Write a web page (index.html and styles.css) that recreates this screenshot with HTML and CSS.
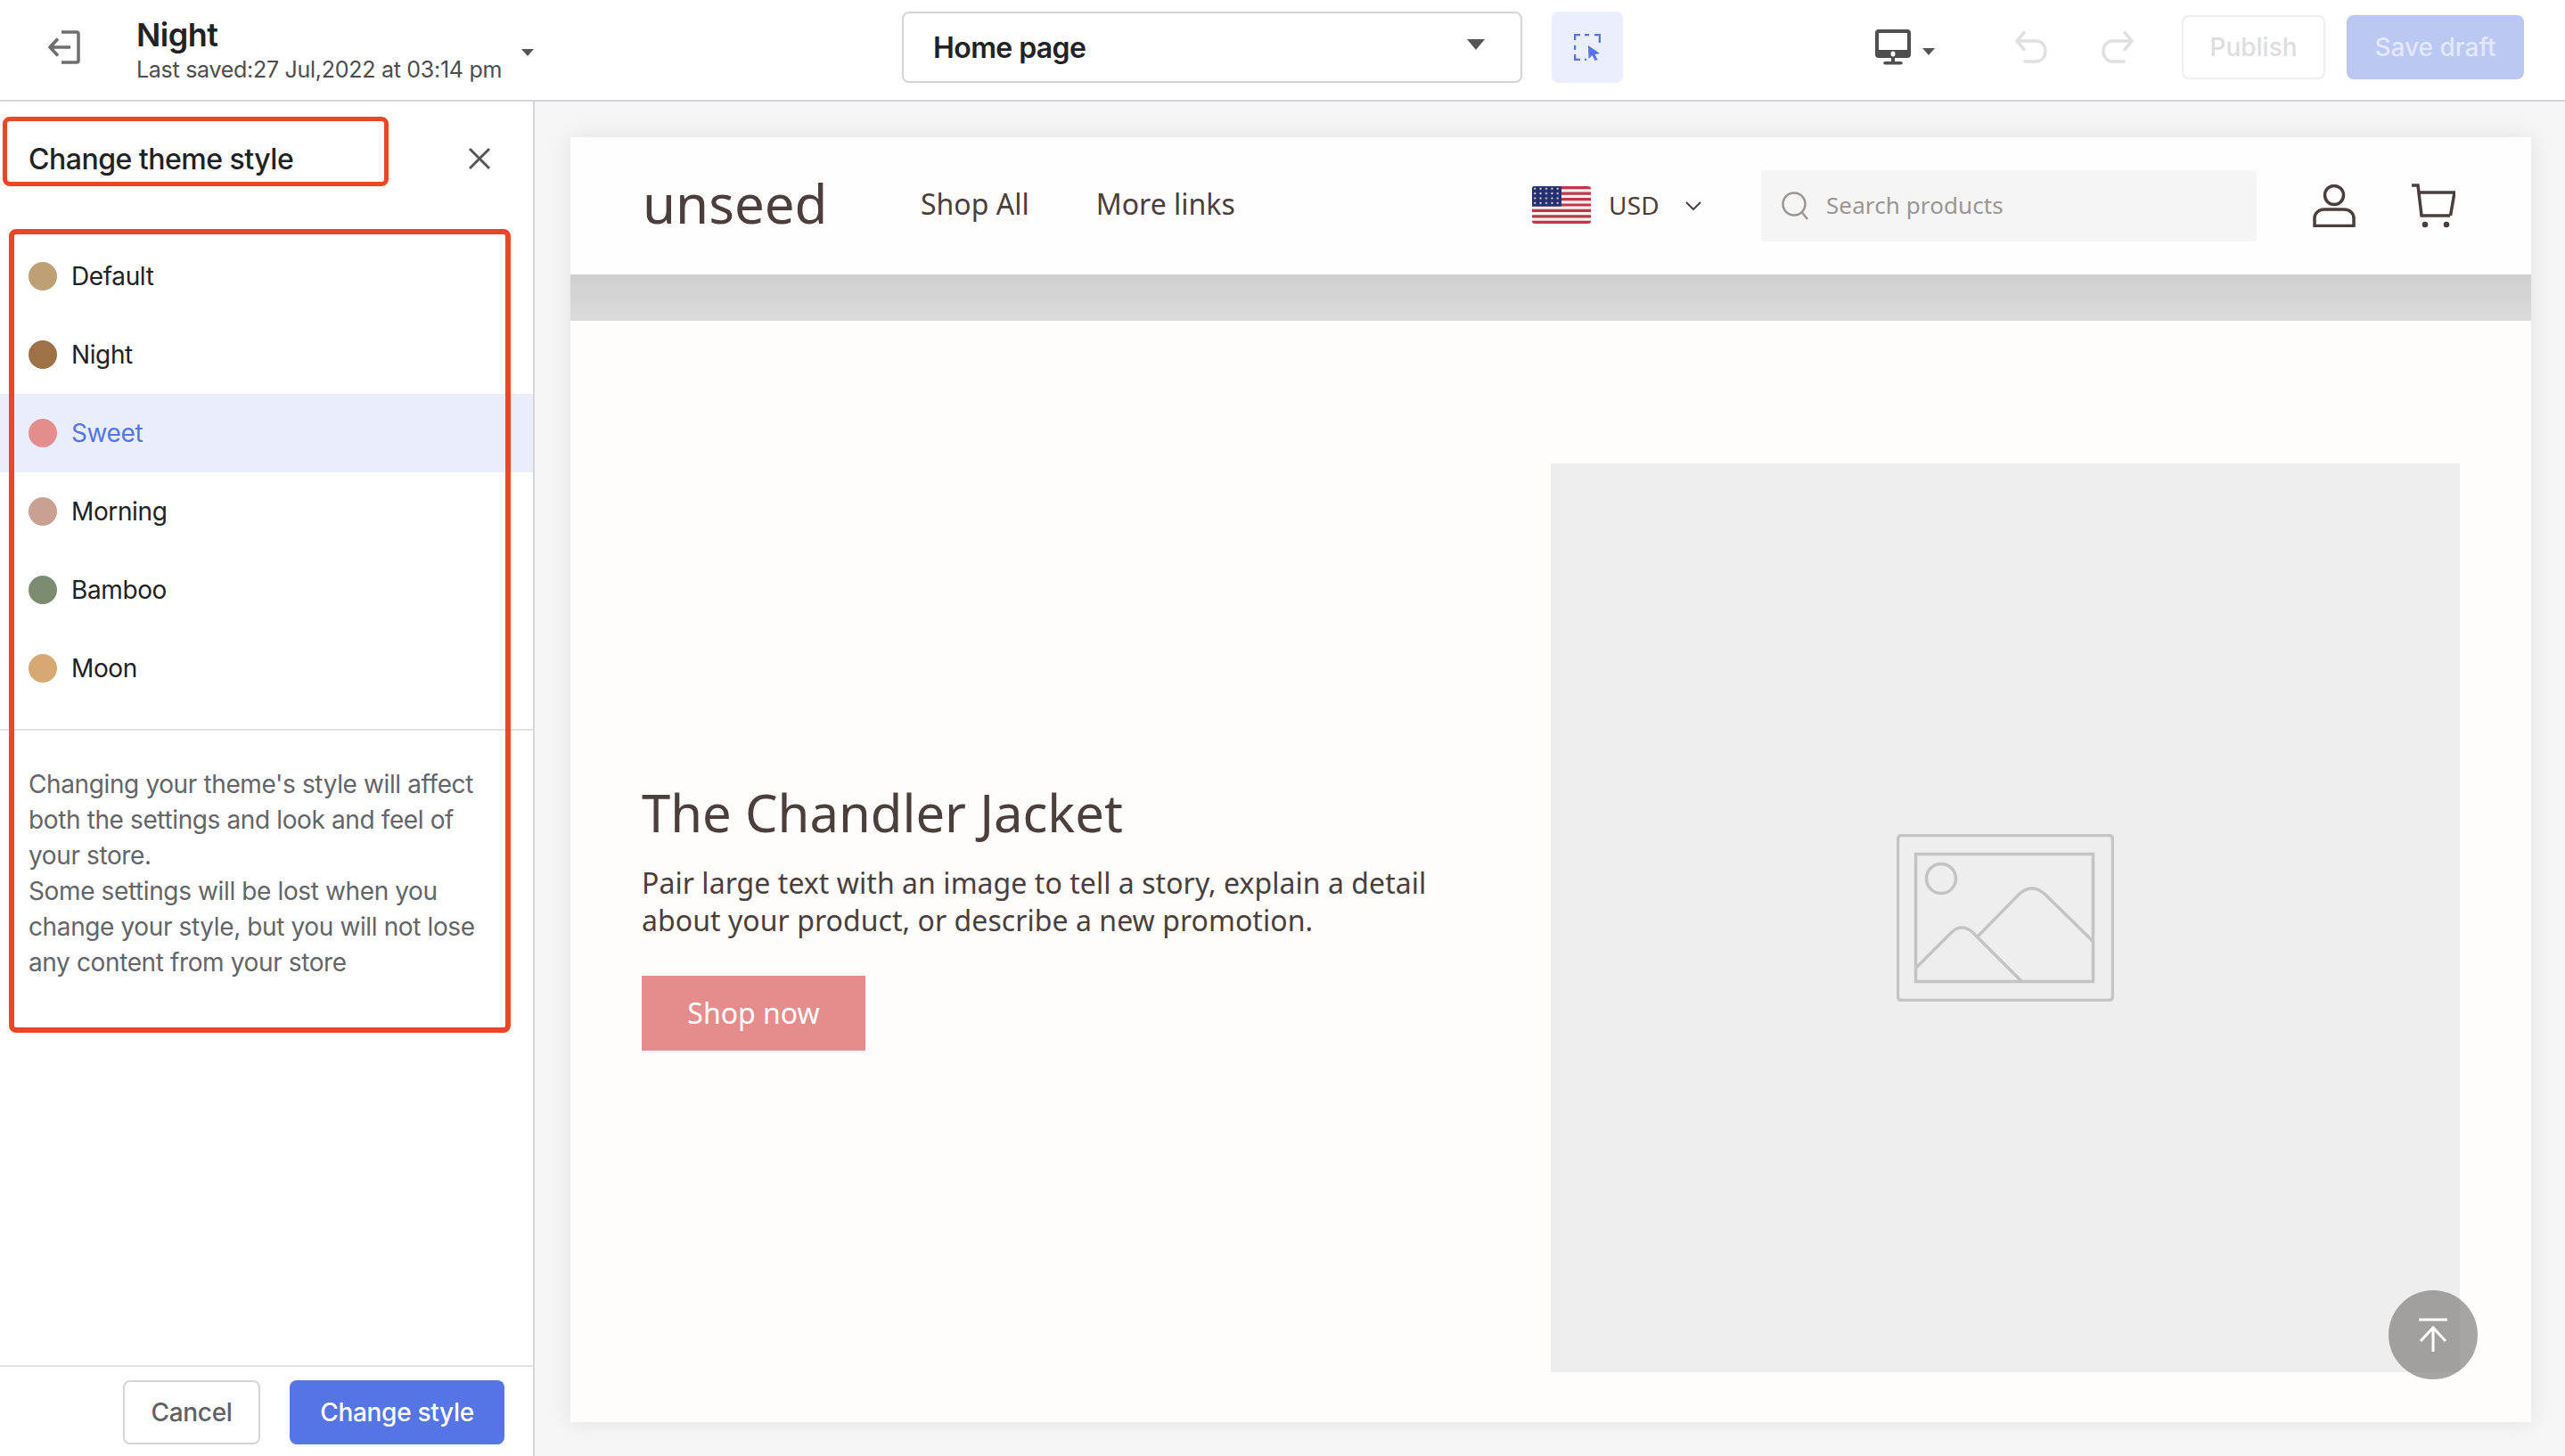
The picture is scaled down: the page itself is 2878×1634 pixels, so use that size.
FILE: index.html
```html
<!DOCTYPE html>
<html lang="en">
<head>
<meta charset="utf-8">
<title>Change theme style</title>
<link rel="stylesheet" href="styles.css">
</head>
<body>
<header class="topbar">
  <svg class="ico-back" viewBox="0 0 36 38"><path d="M15 2h17a2 2 0 0 1 2 2v30a2 2 0 0 1-2 2H15M25 19H2M11 9.500 2 19l9 9.500"/></svg>
  <div class="theme-meta">
    <div class="theme-name">Night</div>
    <div class="theme-saved">Last saved:27 Jul,2022 at 03:14 pm</div>
  </div>
  <span class="caret caret-meta"></span>
  <div class="page-select">
    <span>Home page</span>
    <span class="caret caret-select"></span>
  </div>
  <button class="pick-btn" aria-label="Select">
    <svg class="ico-pick" viewBox="0 0 30 30"><path class="dash" d="M1 7V1h6M12 1h5M23 1h6v9M1 13v5M1 23v6h6M12 29h2"/><path class="arrow" d="M16 13l13 9-5.500 1 3 6-3 1-3-6-4 4z"/></svg>
  </button>
  <div class="top-right">
    <svg class="ico-monitor" viewBox="0 0 40 40"><rect width="40" height="32" rx="4" fill="#4f4f4f"/><rect x="4" y="4" width="32" height="19" fill="#fff"/><ellipse cx="20" cy="27.500" rx="2.500" ry="3" fill="#fff"/><path d="M18 32h4v4h7a1.500 1.500 0 0 1 0 3.500H11a1.500 1.500 0 0 1 0-3.500h7z" fill="#4f4f4f"/></svg>
    <span class="caret caret-device"></span>
    <svg class="ico-hist ico-undo" viewBox="0 0 36 36"><path d="M10 1.500 2 11l8 9.500M2 11h22c5.500 0 10 5 10 11.500S29.500 34 24 34H11"/></svg>
    <svg class="ico-hist ico-redo" viewBox="0 0 36 36"><path d="M26 1.500 34 11l-8 9.500M34 11H12C6.500 11 2 16 2 22.500S6.500 34 12 34h13"/></svg>
    <button class="btn-publish">Publish</button>
    <button class="btn-save">Save draft</button>
  </div>
</header>

<div class="workspace">
  <aside class="sidebar">
    <div class="side-head">
      <h2 class="side-title">Change theme style</h2>
      <svg class="ico-close" viewBox="0 0 26 26"><path d="M2 2l22 22M24 2 2 24"/></svg>
    </div>
    <ul class="styles">
      <li class="style-row"><span class="dot dot-default"></span>Default</li>
      <li class="style-row"><span class="dot dot-night"></span>Night</li>
      <li class="style-row is-active"><span class="dot dot-sweet"></span>Sweet</li>
      <li class="style-row"><span class="dot dot-morning"></span>Morning</li>
      <li class="style-row"><span class="dot dot-bamboo"></span>Bamboo</li>
      <li class="style-row"><span class="dot dot-moon"></span>Moon</li>
    </ul>
    <div class="note">
      <p>Changing your theme's style will affect both the settings and look and feel of your store.</p>
      <p>Some settings will be lost when you change your style, but you will not lose any content from your store</p>
    </div>
    <div class="side-foot">
      <button class="btn-cancel">Cancel</button>
      <button class="btn-change">Change style</button>
    </div>
  </aside>

  <main class="canvas">
    <div class="store">
      <div class="store-head">
        <div class="logo">unseed</div>
        <nav class="store-nav"><span>Shop All</span><span>More links</span></nav>
        <div class="store-tools">
          <svg class="flag" viewBox="0 0 66 42">
            <defs>
              <pattern id="stars" width="6.400" height="5.400" patternUnits="userSpaceOnUse"><circle cx="3.200" cy="2.700" r="1.100" fill="#dfe3f0"/></pattern>
              <clipPath id="flagclip"><rect width="66" height="42" rx="3"/></clipPath>
            </defs>
            <g clip-path="url(#flagclip)">
              <rect width="66" height="42" fill="#f6f1f1"/>
              <path fill="#c0374a" d="M0 0h66v3.230H0zM0 6.460h66v3.230H0zM0 12.920h66v3.230H0zM0 19.380h66v3.230H0zM0 25.850h66v3.230H0zM0 32.310h66v3.230H0zM0 38.770h66V42H0z"/>
              <rect width="33" height="22.600" fill="#24306e"/>
              <rect width="33" height="22.600" fill="url(#stars)"/>
            </g>
          </svg>
          <span class="currency">USD</span>
          <svg class="ico-chev" viewBox="0 0 18 10"><path d="M1 1l8 8 8-8"/></svg>
          <div class="search">
            <svg class="ico-search" viewBox="0 0 30 32"><circle cx="14" cy="14" r="12.500"/><path d="M23 23.500l6 7.500"/></svg>
            <span class="search-text">Search products</span>
          </div>
          <svg class="ico-user" viewBox="0 0 48 48"><circle cx="24" cy="12" r="10.500"/><path d="M2 46.500V38c0-6 5-10 11-10h22c6 0 11 4 11 10v8.500z"/></svg>
          <svg class="ico-cart" viewBox="0 0 50 50"><path d="M1 2h7l4 34h32M9.500 10H49l-4.500 26"/><circle cx="16" cy="46" r="3.300" class="wheel"/><circle cx="40" cy="46" r="3.300" class="wheel"/></svg>
        </div>
      </div>
      <div class="band"></div>
      <section class="hero">
        <div class="hero-text">
          <h1>The Chandler Jacket</h1>
          <p>Pair large text with an image to tell a story, explain a detail about your product, or describe a new promotion.</p>
          <a class="shop-btn">Shop now</a>
        </div>
        <div class="hero-img">
          <svg class="ico-ph" viewBox="0 0 244 188">
            <rect x="1.500" y="1.500" width="241" height="185" rx="4"/>
            <rect x="21.500" y="22.500" width="199" height="143"/>
            <circle cx="50" cy="50" r="16.500"/>
            <path d="M22 150 L62 110 Q73 100 85 110 L140 165 M90 116 L138 67 Q152 55 166 67 L220 120"/>
          </svg>
        </div>
      </section>
    </div>
    <button class="to-top" aria-label="Back to top">
      <svg viewBox="0 0 34 38"><path d="M1 2h32M17 38V10M3 26 17 11l14 15"/></svg>
    </button>
  </main>
</div>

<div class="mark mark-title"></div>
<div class="mark mark-list"></div>
</body>
</html>
```
FILE: styles.css
```css
* { box-sizing: border-box; }
html, body { margin: 0; padding: 0; }
body {
  width: 2878px; height: 1634px; overflow: hidden;
  display: flex; flex-direction: column;
  font-family: Inter, "Liberation Sans", sans-serif;
  color: #202223; background: #fff;
}
button { font-family: inherit; cursor: pointer; }
svg { display: block; flex: none; }

/* top bar */
.topbar {
  height: 114px; flex: none; display: flex; align-items: center;
  padding-left: 54px; border-bottom: 2px solid #d5d5da; background: #fff;
}
.ico-back { width: 36px; height: 38px; margin-top: -6px; }
.ico-back path { fill: none; stroke: #6d6e70; stroke-width: 3.500; }
.theme-meta { margin-left: 63px; width: 432px; }
.theme-name { font-size: 36px; font-weight: 600; line-height: 48px; letter-spacing: -.5px; margin-top: -4px; }
.theme-saved { font-size: 25px; line-height: 30px; color: #4d4d4d; letter-spacing: -.28px; }
.caret { display: block; width: 0; height: 0; border-style: solid; border-color: #555 transparent transparent; }
.caret-meta { border-width: 8px 7px 0; margin-top: 6px; }
.page-select {
  margin-left: 413px; width: 696px; height: 80px; flex: none;
  border: 2px solid #d5d5d8; border-radius: 8px;
  display: flex; align-items: center; justify-content: space-between;
  padding: 0 40px 0 33px; font-size: 32px; font-weight: 600; letter-spacing: -.6px; margin-top: -6px;
}
.caret-select { border-width: 12px 10px 0; margin-top: -6px; }
.pick-btn {
  margin-left: 33px; width: 80px; height: 80px; border: 0; border-radius: 8px;
  background: #eaeefd; display: flex; align-items: center; justify-content: center; margin-top: -6px; padding: 0;
}
.ico-pick { width: 30px; height: 30px; }
.ico-pick .dash { fill: none; stroke: #5574e5; stroke-width: 2.500; }
.ico-pick .arrow { fill: #5574e5; }
.top-right { margin-left: auto; padding-right: 46px; display: flex; align-items: center; margin-top: -6px; }
.ico-monitor { width: 40px; height: 40px; }
.caret-device { border-width: 8px 7px 0; margin-left: 13px; margin-top: 10px; }
.ico-hist { width: 36px; height: 36px; }
.ico-hist path { fill: none; stroke: #e0e0e1; stroke-width: 3.500; stroke-linecap: round; }
.ico-undo { margin-left: 90px; }
.ico-redo { margin-left: 61px; }
.btn-publish {
  margin-left: 54px; width: 161px; height: 72px; background: #fff;
  border: 2px solid #eeeeee; border-radius: 8px; color: #dddddf;
  font-size: 28px; font-weight: 500;
}
.btn-save {
  margin-left: 24px; width: 199px; height: 72px; background: #bcc8f4;
  border: 0; border-radius: 8px; color: #e3e7fa; font-size: 28px; font-weight: 500;
}

/* workspace */
.workspace { flex: 1; display: flex; min-height: 0; }
.sidebar {
  width: 600px; flex: none; display: flex; flex-direction: column;
  border-right: 2px solid #d5d5da; background: #fff;
  letter-spacing: -.38px;
}
.side-head {
  height: 128px; flex: none; display: flex; align-items: center; justify-content: space-between;
  padding: 0 47px 0 32px;
}
.side-title { margin: 0; font-size: 32px; font-weight: 500; letter-spacing: -.5px; }
.ico-close { width: 26px; height: 26px; }
.ico-close path { fill: none; stroke: #555; stroke-width: 3; }
.styles { list-style: none; margin: 24px 0 0; padding: 0 0 24px; border-bottom: 2px solid #e3e3e3; }
.style-row { height: 88px; display: flex; align-items: center; padding-left: 32px; font-size: 28px; }
.style-row.is-active { background: #e9edfc; color: #5574e5; }
.dot { width: 32px; height: 32px; border-radius: 50%; margin-right: 16px; flex: none; }
.dot-default { background: #bea074; }
.dot-night { background: #9e7147; }
.dot-sweet { background: #e58d8d; }
.dot-morning { background: #c9a091; }
.dot-bamboo { background: #7b8c71; }
.dot-moon { background: #d7a972; }
.note { padding: 40px 32px 0; font-size: 28px; line-height: 40px; color: #636568; }
.note p { margin: 0; }
.side-foot {
  margin-top: auto; height: 102px; flex: none; border-top: 2px solid #e3e3e3;
  display: flex; justify-content: flex-end; gap: 33px; padding: 15px 32px 0 0;
}
.btn-cancel {
  width: 154px; height: 72px; background: #fff; border: 2px solid #d5d5d8; border-radius: 8px;
  color: #606266; font-size: 28px; font-weight: 500; letter-spacing: -.3px;
}
.btn-change {
  width: 241px; height: 72px; background: #5574e5; border: 0; border-radius: 8px;
  color: #fff; font-size: 28px; font-weight: 500; letter-spacing: -.3px;
}

/* preview */
.canvas { flex: 1; position: relative; background: #f6f6f6; padding: 40px 38px 38px 40px; min-width: 0; }
.store { height: 100%; display: flex; flex-direction: column; background: #fffdfc; box-shadow: 0 0 24px rgba(0,0,0,.09); font-family: "Noto Sans", "Open Sans", sans-serif; color: #4a3f3c; }
.store-head { height: 154px; flex: none; display: flex; align-items: center; padding: 0 85px 0 81px; background: #fffdfd; }
.logo { width: 312px; font-size: 60px; line-height: 1; margin-top: -6px; }
.store-nav { display: flex; gap: 75px; font-size: 32px; margin-top: -5px; }
.store-tools { margin-left: auto; display: flex; align-items: center; }
.flag { width: 66px; height: 42px; margin-top: -2px; }
.currency { margin-left: 20px; font-size: 28px; width: 86px; margin-top: -2px; letter-spacing: .2px; }
.ico-chev { width: 18px; height: 10px; }
.ico-chev path { fill: none; stroke: #4a3f3c; stroke-width: 2; }
.search {
  margin-left: 67px; width: 556px; height: 80px; background: #f5f5f5; border-radius: 4px;
  display: flex; align-items: center; gap: 20px; padding-left: 23px; font-size: 26px; color: #9b9693;
}
.search-text { margin-top: -2px; letter-spacing: .1px; }
.ico-search { width: 30px; height: 32px; }
.ico-search circle, .ico-search path { fill: none; stroke: #9b9693; stroke-width: 2.500; }
.ico-user { width: 48px; height: 48px; margin-left: 63px; }
.ico-user circle, .ico-user path { fill: none; stroke: #4a3f3c; stroke-width: 3.500; }
.ico-cart { width: 50px; height: 50px; margin-left: 62px; }
.ico-cart path { fill: none; stroke: #4a3f3c; stroke-width: 3.500; }
.ico-cart .wheel { fill: #4a3f3c; }
.band { height: 52px; flex: none; background: linear-gradient(#cfcfcf, #dcdcdc); }
.hero { flex: 1; display: flex; justify-content: space-between; align-items: center; padding: 160px 80px 56px; background: #fffdfc; min-height: 0; }
.hero-text { width: 900px; }
.hero-text h1 { margin: 0; font-size: 58px; font-weight: 400; line-height: 62px; }
.hero-text p { margin: 27px 0 0; font-size: 32px; line-height: 42px; letter-spacing: .05px; }
.shop-btn { display: flex; align-items: center; justify-content: center; margin-top: 41px; width: 251px; height: 84px; background: #e58d8d; color: #fff; font-size: 32px; padding-bottom: 2px; }
.hero-img { width: 1020px; height: 1020px; flex: none; background: #eeeeee; display: flex; align-items: center; justify-content: center; }
.ico-ph { width: 244px; height: 188px; }
.ico-ph rect, .ico-ph circle, .ico-ph path { fill: none; stroke: #c4c4c4; stroke-width: 3.500; }
.to-top {
  position: absolute; left: 2080px; top: 1334px; width: 100px; height: 100px; padding: 0;
  border: 0; border-radius: 50%; background: rgba(120,118,117,.65);
  display: flex; align-items: center; justify-content: center;
}
.to-top svg { width: 34px; height: 38px; }
.to-top path { fill: none; stroke: #fff; stroke-width: 3; }

/* annotations */
.mark { position: absolute; border: 5px solid #ed4527; border-radius: 8px; pointer-events: none; }
.mark-title { left: 3px; top: 131px; width: 433px; height: 78px; }
.mark-list { left: 10px; top: 257px; width: 563px; height: 902px; border-width: 6px; }
```
